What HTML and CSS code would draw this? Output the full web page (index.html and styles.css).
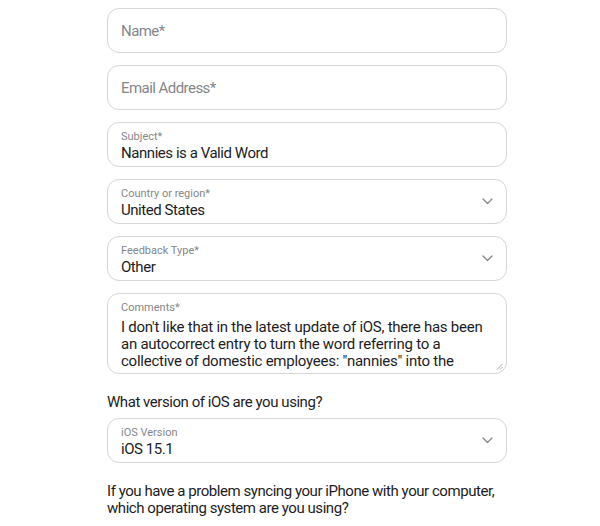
FILE: index.html
```html
<!DOCTYPE html>
<html>
<head>
<meta charset="utf-8">
<link rel="stylesheet" href="styles.css">
</head>
<body>
<form class="form">
  <div class="field empty"><span class="placeholder">Name*</span></div>
  <div class="field empty"><span class="placeholder">Email Address*</span></div>
  <div class="field filled">
    <div class="label">Subject*</div>
    <div class="value">Nannies is a Valid Word</div>
  </div>
  <div class="field filled select">
    <div class="label">Country or region*</div>
    <div class="value">United States</div>
    <svg class="chev" width="11" height="7" viewBox="0 0 11 7"><polyline points="1,1 5.5,5.5 10,1" fill="none" stroke="#86868b" stroke-width="1.3" stroke-linecap="round" stroke-linejoin="round"/></svg>
  </div>
  <div class="field filled select">
    <div class="label">Feedback Type*</div>
    <div class="value">Other</div>
    <svg class="chev" width="11" height="7" viewBox="0 0 11 7"><polyline points="1,1 5.5,5.5 10,1" fill="none" stroke="#86868b" stroke-width="1.3" stroke-linecap="round" stroke-linejoin="round"/></svg>
  </div>
  <div class="field textarea">
    <div class="label">Comments*</div>
    <div class="comment">I don't like that in the latest update of iOS, there has been an autocorrect entry to turn the word referring to a collective of domestic employees: "nannies" into the</div>
    <svg class="grip" width="7" height="7" viewBox="0 0 7 7"><line x1="1" y1="6.5" x2="6.5" y2="1" stroke="#a0a0a5" stroke-width="0.9"/><line x1="4" y1="6.5" x2="6.5" y2="4" stroke="#a0a0a5" stroke-width="0.9"/></svg>
  </div>
  <p class="question q1">What version of iOS are you using?</p>
  <div class="field filled select">
    <div class="label">iOS Version</div>
    <div class="value">iOS 15.1</div>
    <svg class="chev" width="11" height="7" viewBox="0 0 11 7"><polyline points="1,1 5.5,5.5 10,1" fill="none" stroke="#86868b" stroke-width="1.3" stroke-linecap="round" stroke-linejoin="round"/></svg>
  </div>
  <p class="question q2">If you have a problem syncing your iPhone with your computer, which operating system are you using?</p>
</form>
</body>
</html>
```
FILE: styles.css
```css
html, body {
  margin: 0;
  padding: 0;
  background: #ffffff;
}
body {
  font-family: Roboto, "Liberation Sans", Arial, sans-serif;
  color: #1d1d1f;
  width: 600px;
  height: 526px;
  overflow: hidden;
}
.form {
  width: 400px;
  margin-left: 107px;
  padding-top: 8px;
  display: flex;
  flex-direction: column;
}
.field {
  position: relative;
  box-sizing: border-box;
  height: 45px;
  border: 1px solid #d6d6d9;
  border-radius: 12px;
  padding-left: 13px;
  margin-bottom: 12px;
  background: #fff;
}
.empty {
  display: flex;
  align-items: center;
}
.placeholder {
  font-size: 15px;
  letter-spacing: -0.55px;
  color: #86868b;
}
.filled {
  padding-top: 7px;
}
.label {
  font-size: 11px;
  line-height: 14px;
  color: #86868b;
}
.value {
  font-size: 15px;
  line-height: 18px;
  letter-spacing: -0.45px;
  color: #1d1d1f;
}
.chev {
  position: absolute;
  right: 13px;
  top: 18px;
}
.textarea {
  height: 81px;
  padding-top: 7px;
  padding-right: 12px;
}
.comment {
  font-size: 15px;
  line-height: 17px;
  letter-spacing: -0.25px;
  margin-top: 4px;
  color: #1d1d1f;
}
.grip {
  position: absolute;
  right: 3px;
  bottom: 3px;
}
.question {
  margin: 0;
  font-size: 15px;
  line-height: 17px;
  letter-spacing: -0.45px;
  color: #1d1d1f;
}
.q1 {
  margin-top: 7px;
  margin-bottom: 7px;
  line-height: 18px;
}
.q2 {
  margin-top: 8px;
}
```
